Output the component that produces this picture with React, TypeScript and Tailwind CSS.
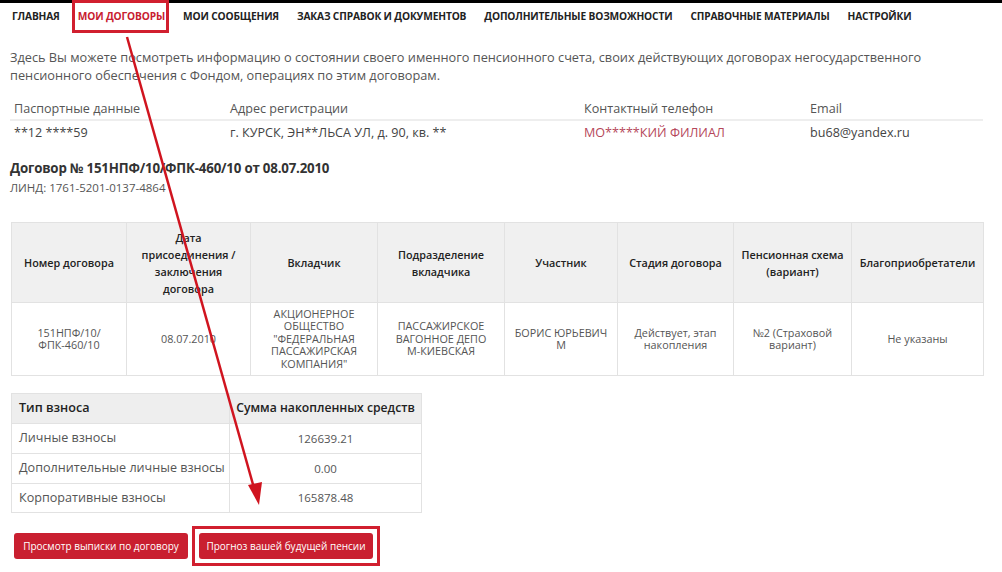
import React from "react";

const navItems = [
  "ГЛАВНАЯ",
  "МОИ ДОГОВОРЫ",
  "МОИ СООБЩЕНИЯ",
  "ЗАКАЗ СПРАВОК И ДОКУМЕНТОВ",
  "ДОПОЛНИТЕЛЬНЫЕ ВОЗМОЖНОСТИ",
  "СПРАВОЧНЫЕ МАТЕРИАЛЫ",
  "НАСТРОЙКИ",
];

export default function App() {
  return (
    <div
      className="relative w-[1002px] h-[572px] overflow-hidden bg-white text-[#333]"
      style={{ fontFamily: '"Open Sans", "Noto Sans", sans-serif' }}
    >
      <div className="h-[3px] bg-black" />
      {/* nav */}
      <nav className="flex items-center h-[28px] pl-[12px] gap-[18px] text-[10.2px] font-bold text-[#222] tracking-[-0.15px]">
        {navItems.map((n, i) =>
          i === 1 ? (
            <div key={n} className="relative text-[#c8202f]">
              {n}
              <div className="absolute -left-[6px] -right-[4px] -top-[9px] -bottom-[8px] border-[3px] border-[#d11f2f]" />
            </div>
          ) : (
            <div key={n}>{n}</div>
          )
        )}
      </nav>

      <div className="pl-[10px] pr-[19px]">
        <p className="mt-[17px] text-[12.75px] leading-[18px] text-[#555]">
          Здесь Вы можете посмотреть информацию о состоянии своего именного пенсионного счета, своих действующих договорах негосударственного
          <br />
          пенсионного обеспечения с Фондом, операциях по этим договорам.
        </p>

        {/* info */}
        <div className="mt-[16px] text-[12.6px] text-[#555]">
          <div className="grid grid-cols-[216px_354px_226px_1fr] h-[21px] items-center pl-[4px] border-b-2 border-[#eeeeee]">
            <div>Паспортные данные</div>
            <div>Адрес регистрации</div>
            <div>Контактный телефон</div>
            <div>Email</div>
          </div>
          <div className="grid grid-cols-[216px_354px_226px_1fr] h-[22px] pt-[2px] items-center pl-[4px] text-[#444]">
            <div>**12 ****59</div>
            <div>г. КУРСК, ЭН**ЛЬСА УЛ, д. 90, кв. **</div>
            <div className="text-[#b5475a]">МО*****КИЙ ФИЛИАЛ</div>
            <div>bu68@yandex.ru</div>
          </div>
        </div>

        <h2 className="mt-[17px] text-[13.3px] leading-[16px] font-bold text-[#333] tracking-[-0.2px]">
          Договор № 151НПФ/10/ФПК-460/10 от 08.07.2010
        </h2>
        <div className="mt-[4px] text-[11.5px] leading-[16px] text-[#555]">
          ЛИНД: 1761-5201-0137-4864
        </div>

        {/* main table */}
        <table className="mt-[26px] ml-[1px] border-collapse w-[972px] table-fixed">
          <colgroup>
            <col className="w-[115px]" />
            <col className="w-[124px]" />
            <col className="w-[127px]" />
            <col className="w-[127px]" />
            <col className="w-[113px]" />
            <col className="w-[116px]" />
            <col className="w-[118px]" />
            <col className="w-[132px]" />
          </colgroup>
          <thead>
            <tr className="h-[80px] bg-[#f0f0f0] text-[10.8px] leading-[17px] font-semibold text-[#222]">
              <th className="border border-[#e2e2e2] font-semibold px-1">Номер договора</th>
              <th className="border border-[#e2e2e2] font-semibold px-1">
                Дата
                <br />
                присоединения /
                <br />
                заключения
                <br />
                договора
              </th>
              <th className="border border-[#e2e2e2] font-semibold px-1">Вкладчик</th>
              <th className="border border-[#e2e2e2] font-semibold px-1">
                Подразделение
                <br />
                вкладчика
              </th>
              <th className="border border-[#e2e2e2] font-semibold px-1">Участник</th>
              <th className="border border-[#e2e2e2] font-semibold px-1">Стадия договора</th>
              <th className="border border-[#e2e2e2] font-semibold px-1">
                Пенсионная схема
                <br />
                (вариант)
              </th>
              <th className="border border-[#e2e2e2] font-semibold px-1 whitespace-nowrap">Благоприобретатели</th>
            </tr>
          </thead>
          <tbody>
            <tr className="h-[73px] text-[10.8px] leading-[12.5px] text-[#555] text-center">
              <td className="border border-[#e2e2e2] px-1">
                151НПФ/10/
                <br />
                ФПК-460/10
              </td>
              <td className="border border-[#e2e2e2] px-1">08.07.2010</td>
              <td className="border border-[#e2e2e2] px-1">
                АКЦИОНЕРНОЕ
                <br />
                ОБЩЕСТВО
                <br />
                "ФЕДЕРАЛЬНАЯ
                <br />
                ПАССАЖИРСКАЯ
                <br />
                КОМПАНИЯ"
              </td>
              <td className="border border-[#e2e2e2] px-1">
                ПАССАЖИРСКОЕ
                <br />
                ВАГОННОЕ ДЕПО
                <br />
                М-КИЕВСКАЯ
              </td>
              <td className="border border-[#e2e2e2] px-1">
                БОРИС ЮРЬЕВИЧ
                <br />М
              </td>
              <td className="border border-[#e2e2e2] px-1">
                Действует, этап
                <br />
                накопления
              </td>
              <td className="border border-[#e2e2e2] px-1">
                №2 (Страховой
                <br />
                вариант)
              </td>
              <td className="border border-[#e2e2e2] px-1">Не указаны</td>
            </tr>
          </tbody>
        </table>

        {/* second table */}
        <table className="mt-[17px] ml-[1px] border-collapse w-[410px] table-fixed text-[12.6px]">
          <colgroup>
            <col className="w-[218px]" />
            <col className="w-[192px]" />
          </colgroup>
          <thead>
            <tr className="h-[30px] bg-[#eeeeee] text-[#222]">
              <th className="border border-[#e2e2e2] text-left pl-[7px] font-semibold">Тип взноса</th>
              <th className="border border-[#e2e2e2] text-center font-semibold whitespace-nowrap text-[12.2px]">Сумма накопленных средств</th>
            </tr>
          </thead>
          <tbody className="text-[#555]">
            <tr className="h-[30px]">
              <td className="border border-[#e2e2e2] pl-[7px]">Личные взносы</td>
              <td className="border border-[#e2e2e2] text-center text-[11.5px]">126639.21</td>
            </tr>
            <tr className="h-[30px]">
              <td className="border border-[#e2e2e2] pl-[7px] whitespace-nowrap">Дополнительные личные взносы</td>
              <td className="border border-[#e2e2e2] text-center text-[11.5px]">0.00</td>
            </tr>
            <tr className="h-[29px]">
              <td className="border border-[#e2e2e2] pl-[7px]">Корпоративные взносы</td>
              <td className="border border-[#e2e2e2] text-center text-[11.5px]">165878.48</td>
            </tr>
          </tbody>
        </table>

        {/* buttons */}
        <div className="mt-[13px] flex items-center">
          <button className="ml-[4px] w-[174px] h-[26px] rounded-[3px] bg-[#c91f30] text-white text-[10px]">
            Просмотр выписки по договору
          </button>
          <div className="ml-[4px] border-[3px] border-[#d11f2f] p-[4px]">
            <button className="w-[174px] h-[26px] rounded-[3px] bg-[#c91f30] text-white text-[10px] block">
              Прогноз вашей будущей пенсии
            </button>
          </div>
        </div>
      </div>

      {/* annotation arrow */}
      <svg className="absolute left-0 top-0 pointer-events-none" width="1002" height="572">
        <line x1="127" y1="37" x2="254" y2="488" stroke="#d0141f" strokeWidth="2.5" />
        <polygon points="259,505 248,485 262,482" fill="#d0141f" />
      </svg>
    </div>
  );
}
